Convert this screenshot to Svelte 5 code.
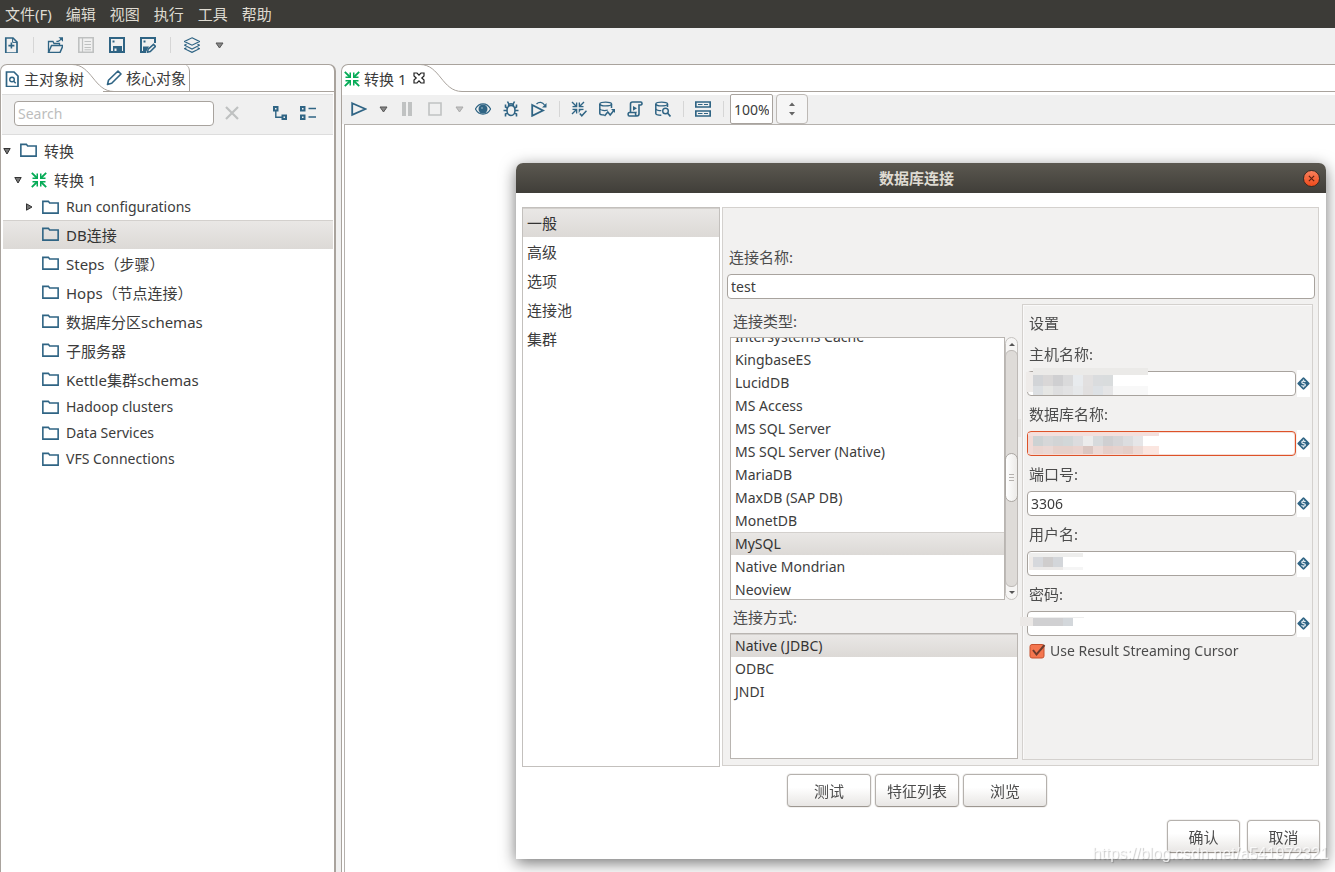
<script>
  import { onMount } from 'svelte';

  const ink = '#2f6484';
  const s = `fill="none" stroke="${ink}"`;
  const icons = {
    newFile: `<path d="M2.8 1H10l4 4v11H2.8z" ${s} stroke-width="1.7"/><path d="M9.6 1v4.4H14" ${s} stroke-width="1"/><path d="M8.4 5.6v6M5.4 8.6h6" ${s} stroke-width="1.6"/>`,
    open: `<path d="M1.5 15V4.500h4.500l1 2h5.500V8.500" ${s} stroke-width="1.300"/><path d="M1.500 15.500l3-7H16l-3 7z" ${s} stroke-width="1.500"/><path d="M9.500 4c1 .8 3 .4 4.500-2" ${s} stroke-width="1.300"/><path d="M11.500.3H16v4.500z" fill="${ink}"/>`,
    explore: `<g fill="none" stroke="#bfc1c1"><path d="M.8.800h14.400v14.400H.8z" stroke-width="1.600"/><path d="M4.500 1v14" stroke-width="1.200"/><path d="M6.500 4.500h6.500M6.500 7.500h6.500M6.500 10.500h6.500M6.500 12.800h6.500" stroke-width="1"/></g>`,
    save: `<path d="M1 1h14v14H1z" ${s} stroke-width="2"/><path d="M4 9h9v6H4z" fill="${ink}"/><path d="M5.500 11.500h2V14h-2z" fill="#f0f0f0"/><path d="M3.500 3.500h2v2h-2z" fill="${ink}"/>`,
    saveAs: `<path d="M15 6V1H1v14h5" ${s} stroke-width="2"/><path d="M3 9.500h6L6 15H3z" fill="${ink}"/><path d="M3.500 3.500h2v2h-2z" fill="${ink}"/><path d="M7.500 15.200l.7-3 5.300-4.800 2 2-5.200 5.200z" fill="#f0f0f0" stroke="${ink}" stroke-width="1.500"/>`,
    layers: `<path d="M8 .8l7.500 3.700L8 8.200.5 4.500z M2.500 7.200L.5 8.200 8 12l7.500-3.800-2-1 M2.500 10.700l-2 1L8 15.400l7.500-3.700-2-1" ${s} stroke-width="1.200"/>`,
    docFind: `<path d="M2.500 1H10l4 4v10.500H2.500z" ${s} stroke-width="1.700"/><circle cx="8" cy="8.500" r="2.300" ${s} stroke-width="1.400"/><path d="M9.700 10.200l2 2" ${s} stroke-width="1.500"/>`,
    pencil: `<path d="M1.500 14.500l1-4.300L12 1l3 3-9.300 9.300z" ${s} stroke-width="1.600" stroke-linejoin="round"/>`,
    expandTree: `<path d="M2 2h3.500v3.500H2z M10.500 10.500H14V14h-3.500z" ${s} stroke-width="2"/><path d="M3.800 6v6.300H10" ${s} stroke-width="1.400"/>`,
    collapseTree: `<path d="M1 2h3.500v3.500H1z M1 10.500h3.500V14H1z" ${s} stroke-width="2"/><path d="M8.500 3.500H16M8.500 12H16" ${s} stroke-width="1.600"/>`,
    clear: `<path d="M2 2l12 12M14 2L2 14" fill="none" stroke="#bfc1c1" stroke-width="2.200"/>`,
    folder: `<path d="M.8 13.300V2.200H6l1.200 1.600h8v9.500z" ${s} stroke-width="1.500"/>`,
    transform: `<g fill="none" stroke="#05ab56" stroke-width="1.800"><path d="M.8.800L5 5M15.200.800L11 5M.8 15.200L5 11M15.200 15.200L11 11"/></g><g fill="#05ab56"><path d="M7 1.500V7H1.500V5.500H4L5.500 4V1.500zM9 1.500V7h5.500V5.500H12L10.500 4V1.500zM7 14.500V9H1.500v1.500H4L5.500 12v2.500zM9 14.500V9h5.500v1.500H12L10.500 12v2.500z"/></g>`,
    play: `<path d="M1.200 2.200L14.500 8 1.200 13.800z" ${s} stroke-width="1.800"/>`,
    pause: `<path d="M3 1h4v14H3zM9 1h4v14H9z" fill="#c0c2c2"/>`,
    stop: `<path d="M2 2h12v12H2z" fill="none" stroke="#c0c2c2" stroke-width="1.600"/>`,
    eye: `<path d="M.4 8C4 1.200 12 1.200 15.600 8 12 14.800 4 14.800.4 8z" ${s} stroke-width="1.200"/><circle cx="8" cy="8" r="4.500" fill="${ink}"/><circle cx="7" cy="7" r="1" fill="#7d9fb2"/>`,
    bug: `<path d="M8 4.500c3 0 4 2.800 4 5s-1.400 5-4 5-4-2.800-4-5 1-5 4-5z M5.500 4.800C5.300 2 10.700 2 10.500 4.800 M5.800 3L4.500.5 M10.200 3L11.500.5 M4.300 7L2.500 6V3.500 M4 9.500H.5 M4.500 12L2.500 13v2.500 M11.700 7l1.800-1V3.500 M12 9.500h3.500 M11.500 12l2 1v2.500" ${s} stroke-width="1.600"/>`,
    replay: `<path d="M1.200 4l10.800 5.500L1.200 14.800z" ${s} stroke-width="1.800"/><path d="M5.500 3C8 .5 11.500.8 13.500 4" ${s} stroke-width="1.300"/><path d="M15.500 2v4.500H11z" fill="${ink}"/>`,
    verify: `<path d="M1 1l4.500 4.500M13 1L8.500 5.500M1 13l4.500-4.500" ${s} stroke-width="1.400"/><path d="M6.300 1.500V6.300H1.500V5l3.300-.3L5 1.500zM7.700 1.500v4.800h4.800V5l-3.300-.3L9 1.500zM6.300 12.500V7.700H1.500V9l3.300.3.200 3.200zM7.700 12.500V7.700h4.800V9L9.500 9.300z" fill="${ink}"/><path d="M8.800 12.500l2 2.300 4.700-5" ${s} stroke-width="1.500"/>`,
    impact: `<path d="M12.500 7V3M.8 3v9.500c0 1 2 1.500 4.500 1.600" ${s} stroke-width="1.500"/><ellipse cx="6.700" cy="3" rx="5.900" ry="1.900" ${s} stroke-width="1.400"/><path d="M.8 8c1 1.500 5 2 8 1" ${s} stroke-width="1.300"/><path d="M5.500 15l3.300-4 2.400 3 4-5" ${s} stroke-width="1.500"/><path d="M12 8h4v4z" fill="${ink}"/>`,
    sql: `<path d="M3.500 11V3c0-1.500.8-2 2-2h8.300c1.500 0 1.700 3 0 3H12v8.800c0 1.500-.8 2.200-2 2.200H2.300C.8 15 .6 11.500 2.300 11.500h6.500c-.6 1.500-.2 3.500 1.200 3.500" ${s} stroke-width="1.600"/><path d="M6 5l4 2.300L6 9.700z" fill="${ink}"/>`,
    dbFind: `<path d="M12.500 6V3M.8 3v9.500c0 1 2 1.700 5.500 1.700" ${s} stroke-width="1.500"/><ellipse cx="6.700" cy="3" rx="5.900" ry="1.900" ${s} stroke-width="1.400"/><path d="M.8 8c.8 1.400 3 1.700 5.500 1.700" ${s} stroke-width="1.300"/><circle cx="10.500" cy="10" r="2.800" ${s} stroke-width="1.400"/><path d="M12.500 12l3 3.500" ${s} stroke-width="1.700"/>`,
    results: `<path d="M.8 1h14.400v5H.8z M.8 10h14.400v5H.8z" ${s} stroke-width="1.700"/><path d="M3 3.500h4.500M9 3.500h4M3 12.500h4.500M9 12.500h4" ${s} stroke-width="1.200"/>`,
    variable: `<path d="M8 2L14 8 8 14 2 8z" fill="${ink}" stroke="${ink}" stroke-width="3" stroke-linejoin="round"/><path d="M10.400 5.900C9.500 4.700 5.900 4.500 5.900 6.500S10.300 8 10.300 9.800 6.500 11.500 5.500 10.200M8 3.200v1.600M8 11.200v1.600" fill="none" stroke="#e4edf2" stroke-width="1.500"/>`
  };

  const menus = ['文件(F)', '编辑', '视图', '执行', '工具', '帮助'];

  const tree = [
    { text: '转换', level: 0, icon: 'folder', arrow: 'open', tall: true },
    { text: '转换 1', level: 1, icon: 'transform', arrow: 'open', tall: true },
    { text: 'Run configurations', level: 2, icon: 'folder', arrow: 'closed' },
    { text: 'DB连接', level: 2, icon: 'folder', tall: true },
    { text: 'Steps（步骤）', level: 2, icon: 'folder', tall: true },
    { text: 'Hops（节点连接）', level: 2, icon: 'folder', tall: true },
    { text: '数据库分区schemas', level: 2, icon: 'folder', tall: true },
    { text: '子服务器', level: 2, icon: 'folder', tall: true },
    { text: 'Kettle集群schemas', level: 2, icon: 'folder', tall: true },
    { text: 'Hadoop clusters', level: 2, icon: 'folder' },
    { text: 'Data Services', level: 2, icon: 'folder' },
    { text: 'VFS Connections', level: 2, icon: 'folder' }
  ];
  let node = $state('DB连接');

  const pages = ['一般', '高级', '选项', '连接池', '集群'];
  let page = $state('一般');

  const types = [
    'Intersystems Cache', 'KingbaseES', 'LucidDB', 'MS Access', 'MS SQL Server',
    'MS SQL Server (Native)', 'MariaDB', 'MaxDB (SAP DB)', 'MonetDB', 'MySQL',
    'Native Mondrian', 'Neoview'
  ];
  let type = $state('MySQL');

  const methods = ['Native (JDBC)', 'ODBC', 'JNDI'];
  let method = $state('Native (JDBC)');

  // Redaction blocks: [x, y, width, height, colour], relative to the field.
  const row = (x, y, h, colours) => colours.map((c, i) => [x + i * 10, y, 10, h, c]);
  const fields = [
    { id: 'host', label: '主机名称:', value: '', blocks: [
      [6, -3, 115, 7, '#ebeae8'], [-1, 1, 7, 20, '#eeebe9'], [6, 4, 115, 11, '#fff'], [6, 15, 115, 9, '#f8f8f8'],
      ...row(6, 4, 11, ['#d2d4d7', '#d9d7d7', '#cfcfd1', '#dadadb', '#e8ebee', '#e2e0e0', '#dadcde', '#d9dcdd']),
      ...row(6, 15, 9, ['#dcdfe2', '#e6e6e4', '#dededf', '#e2e2e3', '#e6e8ea', '#e1dfdf', '#dde1e5', '#e5e5e6'])] },
    { id: 'database', label: '数据库名称:', value: '', focus: true, blocks: [
      [-9, -12, 3, 18, '#e9e7e5'], [1, 2, 131, 3, '#f4dfdc'], [1, 5, 5, 18, '#f1dad6'], [6, 15, 126, 8, '#fbe6e0'],
      ...row(6, 5, 10, ['#cdd2d3', '#d6d7d8', '#d2d4d5', '#d2d7d8', '#dcdcde', '#ececec', '#d7dadc', '#cfcfd1', '#d5d5d7', '#dcdddf', '#e6e6e8']),
      ...row(6, 15, 8, ['#ead5d0', '#ead8d4', '#e6d1cb', '#e6d1cb', '#e9d3ce', '#dac6c1', '#ecdad6', '#e5cfca', '#e6d2cd', '#e4cec8', '#eddad5'])] },
    { id: 'port', label: '端口号:', value: '3306', blocks: [] },
    { id: 'user', label: '用户名:', value: '', blocks: [
      [2, 2, 54, 4, '#eeeeed'], [2, 6, 4, 13, '#efebe8'], [6, 16, 30, 3, '#ebe9e8'], [36, 16, 20, 3, '#f5f5f5'],
      ...row(6, 6, 10, ['#d6d8dc', '#cfcdcd', '#d3d6da'])] },
    { id: 'password', label: '密码:', value: '', blocks: [
      [-7, 6, 13, 9, '#ebe8e6'], [6, 6, 51, 1, '#eeeeee'],
      ...row(6, 7, 8, ['#d0d0d2', '#d0d0d2', '#d0d0d2', '#d3d7db'])] }
  ];

  let name = $state('test');
  let streaming = $state(true);
  let typeList;
  onMount(() => { typeList.scrollTop = 13; });
</script>

{#snippet icon(id, size = 16)}
  <svg class="icon" width={size} height={size} viewBox="0 0 16 16" aria-hidden="true">{@html icons[id]}</svg>
{/snippet}

{#snippet tool(id, label, disabled = false)}
  <button class="tool" type="button" aria-label={label} {disabled}>{@render icon(id)}</button>
{/snippet}

{#snippet drop(label, disabled = false)}
  <button class="drop" type="button" aria-label={label} {disabled}>
    <svg width="9" height="7" viewBox="0 0 9 7"><path d="M1 1h7L4.500 6z" fill={disabled ? '#c4c4c4' : '#888'} stroke={disabled ? '#aaa' : '#555'} /></svg>
  </button>
{/snippet}

{#snippet shoulder()}
  <svg class="shoulder" width="42" height="28" viewBox="0 0 42 28" aria-hidden="true">
    <path d="M0 .500C20 .500 22 27.500 42 27.500" fill="none" stroke="#a9a39d" />
  </svg>
{/snippet}

<div class="app">
  <nav class="menubar">
    {#each menus as m}<button type="button">{m}</button>{/each}
  </nav>

  <div class="toolbar main-tools">
    {@render tool('newFile', '新建')}
    <span class="sep"></span>
    {@render tool('open', '打开')}
    {@render tool('explore', '探索资源库', true)}
    {@render tool('save', '保存')}
    {@render tool('saveAs', '另存为')}
    <span class="sep"></span>
    {@render tool('layers', '透视图')}
    {@render drop('选择透视图')}
  </div>

  <main class="workspace">
    <section class="explorer">
      <div class="tabs">
        <button class="tab current" type="button">{@render icon('docFind')}主对象树</button>
        {@render shoulder()}
        <button class="tab other" type="button">{@render icon('pencil')}核心对象</button>
        <span class="rest"></span>
      </div>
      <div class="search">
        <input type="text" placeholder="Search" aria-label="Search" />
        <button type="button" aria-label="清除">{@render icon('clear')}</button>
        <span class="grow"></span>
        <button type="button" aria-label="展开">{@render icon('expandTree')}</button>
        <button type="button" aria-label="折叠">{@render icon('collapseTree')}</button>
      </div>
      <ul class="tree">
        {#each tree as t}
          <li>
            <button type="button" class="node level{t.level}" class:tall={t.tall} class:selected={node === t.text} onclick={() => (node = t.text)}>
              <svg class="arrow" width="8" height="8" viewBox="0 0 8 8" aria-hidden="true">
                {#if t.arrow === 'open'}<path d="M.8 1.500h6.400L4 7z" fill="#777" stroke="#333" />{/if}
                {#if t.arrow === 'closed'}<path d="M1.500.8v6.400L7 4z" fill="#777" stroke="#333" />{/if}
              </svg>
              {@render icon(t.icon, t.icon === 'folder' ? 17 : 16)}
              <span>{t.text}</span>
            </button>
          </li>
        {/each}
      </ul>
    </section>

    <section class="editor">
      <div class="tabs">
        <button class="tab current" type="button">{@render icon('transform')}转换 1</button>
        <button class="close-tab" type="button" aria-label="关闭">
          <svg width="12" height="12" viewBox="0 0 12 12"><path d="M1 1h3l2 2.200L8 1h3v3L8.800 6 11 8v3H8L6 8.800 4 11H1V8l2.200-2L1 4z" fill="#fff" stroke="#222" stroke-width="1.200" /></svg>
        </button>
        {@render shoulder()}
        <span class="rest"></span>
      </div>
      <div class="toolbar edit-tools">
        {@render tool('play', '运行')}
        {@render drop('运行选项')}
        {@render tool('pause', '暂停', true)}
        {@render tool('stop', '停止', true)}
        {@render drop('停止选项', true)}
        {@render tool('eye', '预览')}
        {@render tool('bug', '调试')}
        {@render tool('replay', '重放')}
        <span class="sep"></span>
        {@render tool('verify', '校验')}
        {@render tool('impact', '影响分析')}
        {@render tool('sql', 'SQL')}
        {@render tool('dbFind', '浏览数据库')}
        <span class="sep"></span>
        {@render tool('results', '执行结果')}
        <span class="sep"></span>
        <input class="zoom" type="text" value="100%" aria-label="缩放" />
        <button class="spinner" type="button" aria-label="调整缩放">
          <svg width="8" height="14" viewBox="0 0 8 14"><path d="M1 4h6L4 .5zM1 10h6l-3 3.500z" fill="#666" /></svg>
        </button>
      </div>
      <div class="canvas"></div>
    </section>
  </main>

  <div class="dialog" role="dialog" aria-labelledby="dialog-title">
    <header>
      <h1 id="dialog-title">数据库连接</h1>
      <button type="button" aria-label="关闭">
        <svg width="7" height="7" viewBox="0 0 8 8"><path d="M1 1l6 6M7 1L1 7" stroke="#5a1f10" stroke-width="1.300" /></svg>
      </button>
    </header>
    <div class="content">
      <ul class="pages">
        {#each pages as p}
          <li><button type="button" class:selected={page === p} onclick={() => (page = p)}>{p}</button></li>
        {/each}
      </ul>
      <div class="panel">
        <label for="name">连接名称:</label>
        <input id="name" type="text" bind:value={name} />
        <div class="columns">
          <div class="kinds">
            <h2>连接类型:</h2>
            <div class="scroller">
              <ul class="list" bind:this={typeList}>
                {#each types as t}
                  <li><button type="button" class:selected={type === t} onclick={() => (type = t)}>{t}</button></li>
                {/each}
              </ul>
              <div class="scrollbar" aria-hidden="true">
                <svg width="13" height="12" viewBox="0 0 13 12"><path d="M3 8h6L6 5z" fill="#555" /></svg>
                <div class="track"><div class="thumb"></div></div>
                <svg width="13" height="12" viewBox="0 0 13 12"><path d="M3 4h6L6 7z" fill="#555" /></svg>
              </div>
            </div>
            <h2>连接方式:</h2>
            <ul class="list methods">
              {#each methods as m}
                <li><button type="button" class:selected={method === m} onclick={() => (method = m)}>{m}</button></li>
              {/each}
            </ul>
          </div>
          <div class="settings">
            <h2>设置</h2>
            {#each fields as f}
              <label for={f.id}>{f.label}</label>
              <div class="field">
                <input id={f.id} type="text" value={f.value} class:focus={f.focus} />
                <span class="variable">{@render icon('variable', 13)}</span>
                {#if f.blocks.length}
                  <svg class="blocks" width="140" height="26" aria-hidden="true">
                    {#each f.blocks as [x, y, w, h, c]}<rect {x} {y} width={w} height={h} fill={c} />{/each}
                  </svg>
                {/if}
              </div>
            {/each}
            <label class="check">
              <input type="checkbox" bind:checked={streaming} />
              <svg width="17" height="16" viewBox="0 0 17 16" aria-hidden="true">
                <rect x="1" y="1.500" width="14" height="13.500" rx="2" fill="#f4764f" stroke="#c5512f" />
                {#if streaming}<path d="M4 7l3.500 4.500L15.500 2" fill="none" stroke="#6b3a2c" stroke-width="2" />{/if}
              </svg>
              Use Result Streaming Cursor
            </label>
          </div>
        </div>
      </div>
    </div>
    <div class="actions">
      <button type="button">测试</button>
      <button type="button">特征列表</button>
      <button type="button">浏览</button>
    </div>
    <footer>
      <button type="button">确认</button>
      <button type="button">取消</button>
    </footer>
  </div>

  <span class="watermark">https://blog.csdn.net/a541972321</span>
</div>

<style>
  :global(body) { margin: 0; }
  .app {
    position: relative;
    display: flex;
    flex-direction: column;
    min-height: 100vh;
    overflow: hidden;
    background: #f0f0f0;
    color: #3c3c3c;
    font: 15px/20px "Noto Sans", "Noto Sans CJK SC", sans-serif;
  }
  .app :global(*) { box-sizing: border-box; }
  button, input { font: inherit; color: inherit; margin: 0; }
  button { padding: 0; border: 0; background: none; text-align: left; white-space: nowrap; }
  ul { list-style: none; margin: 0; padding: 0; }
  h1, h2 { margin: 0; font-size: 15px; font-weight: 400; }
  svg { display: block; flex: none; }
  input[type='text'] {
    min-width: 0;
    height: 25px;
    padding: 0 3px;
    border: 1px solid #a8a39e;
    border-radius: 4px;
    background: #fff;
    font-size: 14px;
    outline: 0;
  }

  .menubar { display: flex; gap: 14px; height: 28px; padding: 0 5px; background: #3c3b37; color: #dfdbd2; }

  .toolbar { display: flex; align-items: center; }
  .tool { display: flex; align-items: center; justify-content: center; width: 28px; height: 28px; }
  .drop { display: flex; align-items: center; justify-content: center; width: 20px; height: 28px; }
  .sep { width: 12px; height: 16px; background: linear-gradient(#d6d6d6, #d6d6d6) center / 1px 100% no-repeat; }
  .main-tools { height: 36px; gap: 3px; padding: 0 0 2px 0; }
  .main-tools .tool:first-child { margin-left: -3px; }
  .main-tools .sep { width: 10px; }

  .workspace { display: flex; flex: 1; gap: 5px; }
  .explorer { display: flex; flex-direction: column; width: 336px; border: solid #a9a39d; border-width: 1px 2px 0 1px; border-radius: 7px 7px 0 0; background: #fff; }
  .editor { display: flex; flex-direction: column; flex: 1; border: solid #a9a39d; border-width: 1px 0 0 1px; border-radius: 7px 0 0 0; background: #fff; }
  .tabs { display: flex; height: 28px; margin-top: -1px; }
  .tab { display: flex; align-items: center; gap: 4px; padding: 1px 0 0 3px; }
  .current { position: relative; z-index: 1; }
  .explorer .shoulder { margin-left: -12px; }
  .other { margin-left: -11px; padding-right: 3px; border: 1px solid #a9a39d; border-width: 0 1px 1px 0; border-radius: 0 7px 0 0; }
  .rest { flex: 1; border-bottom: 1px solid #a9a39d; }
  .editor .tab { padding-left: 2px; }
  .close-tab { position: relative; z-index: 1; width: 12px; margin: 0 -5px 0 7px; }

  .search { display: flex; align-items: center; gap: 8px; height: 41px; margin: 2px 1px 0; padding: 0 15px 3px 12px; border-top: 1px solid #ddd; border-bottom: 1px solid #ddd; background: #f0f0f0; }
  .search input { flex: 0 1 200px; }
  .search input::placeholder { color: #bdbdbd; opacity: 1; }
  .search button { padding: 0 2px; }
  .grow { flex: 1; }

  .tree { padding: 1px 1px 0 2px; }
  .node { display: flex; align-items: center; width: 100%; height: 26px; font-size: 14px; }
  .node.tall { height: 29px; font-size: 15px; }
  .node :global(.icon) { margin: 0 7px 0 9px; }
  .level1 { padding-left: 11px; }
  .level2 { padding-left: 22px; }
  .selected { background: linear-gradient(#eae8e6, #dcd9d6); box-shadow: inset 0 1px #d3d0cd; color: #333; }

  .edit-tools { height: 32px; padding: 2px 0 0 3px; background: linear-gradient(#fff 3px, #f0f0f0 3px); }
  .zoom.zoom { width: 43px; height: 30px; margin-left: 1px; border-radius: 2px; }
  .spinner { display: flex; align-items: center; justify-content: center; width: 32px; height: 30px; margin-left: 3px; border: 1px solid #bdb9b5; border-radius: 4px; background: #f6f6f6; }
  .canvas { flex: 1; margin-left: 2px; border: solid #b5b1ad; border-width: 1px 0 0 1px; background: #fff; }

  .dialog { position: absolute; top: 163px; right: 9px; width: 810px; border-radius: 7px 7px 0 0; background: #fff; box-shadow: 0 4px 16px rgba(0, 0, 0, 0.55); }
  header { display: flex; align-items: center; height: 30px; padding: 0 6px 0 14px; border-radius: 7px 7px 0 0; background: linear-gradient(#5b5850, #403e39); color: #dfdbd2; }
  h1 { flex: 1; text-align: center; font-weight: 700; }
  header button { display: flex; align-items: center; justify-content: center; width: 17px; height: 17px; border: 1px solid #3a2a22; border-radius: 50%; background: linear-gradient(#f9805c, #ee4b1c); }
  .content { display: flex; gap: 2px; height: 574px; padding: 14px 7px 0 6px; }
  .pages { width: 198px; border: 1px solid #c3c0bd; }
  .pages button { display: block; width: 100%; height: 29px; padding: 0 4px; }
  .panel { display: flex; flex-direction: column; flex: 1; margin-bottom: 1px; padding: 39px 3px 5px 4px; border: 1px solid #d4d1ce; background: #f2f1f0; color: #4c4c4c; }
  .panel > label { margin: 0 2px 7px; }
  .panel input[type='text'] { color: #3c3c3c; }
  .columns { display: flex; flex: 1; gap: 4px; padding: 5px 2px 0 3px; }
  .kinds { display: flex; flex-direction: column; width: 288px; padding-bottom: 1px; }
  .kinds h2 { height: 33px; padding: 7px 3px 0; }
  .scroller { display: flex; height: 263px; }
  .list { flex: 1; overflow-y: scroll; scrollbar-width: none; border: 1px solid #b9b5b1; background: #fff; font-size: 14px; color: #3c3c3c; }
  .list button { display: block; width: 100%; height: 23px; padding: 0 4px; }
  .scrollbar { display: flex; flex-direction: column; width: 13px; border: 1px solid #c5c2bf; border-radius: 7px; background: #f6f5f4; }
  .track { flex: 1; margin: 0 -1px; padding-top: 102px; border: 1px solid #bdb9b6; border-radius: 6px; background: #dedbd8; }
  .thumb { height: 49px; margin: 0 -1px; border: 1px solid #aaa6a2; border-radius: 7px; background: repeating-linear-gradient(#b5b1ae 0 1px, transparent 1px 3px) center / 5px 7px no-repeat, linear-gradient(90deg, #fff, #eceae8); }
  .settings { flex: 1; padding: 8px 2px 0 4px; border: 1px solid #d4d1ce; box-shadow: inset 1px 1px #faf9f9; }
  .settings h2 { margin: 0 2px 11px; }
  .settings > label { display: block; height: 20px; margin: 0 2px 7px; }
  .field { position: relative; display: flex; align-items: center; gap: 1px; height: 25px; margin-bottom: 8px; }
  .field input { flex: 1; }
  .field .focus { border-color: #dd5228; box-shadow: inset 0 0 0 1px #f7dcd4; }
  .variable { display: flex; align-items: center; height: 27px; background: #fff; }
  .blocks { position: absolute; top: 0; left: 0; overflow: visible; }
  .settings > .check { position: relative; display: flex; align-items: center; gap: 4px; margin-top: -3px; font-size: 14px; }
  .check input { position: absolute; width: 15px; height: 15px; opacity: 0; }

  .actions, footer { display: flex; }
  .actions { justify-content: center; gap: 4px; padding: 7px 14px 0 6px; }
  .actions button, footer button { height: 33px; border: 1px solid #b5b1ad; border-bottom-color: #9d9791; border-radius: 4px; background: linear-gradient(#fff 40%, #e8e6e4); box-shadow: 0 0 0 1px #f2f1f0; text-align: center; color: #4c4c4c; }
  .actions button { width: 84px; }
  footer { justify-content: flex-end; gap: 7px; padding: 13px 6px 6px; }
  footer button { width: 73px; }

  .watermark { position: absolute; right: 6px; bottom: 8px; font: 16px/20px "Liberation Sans", sans-serif; color: rgba(255, 255, 255, 0.75); text-shadow: 1px 1px 1px rgba(0, 0, 0, 0.2); }
</style>
